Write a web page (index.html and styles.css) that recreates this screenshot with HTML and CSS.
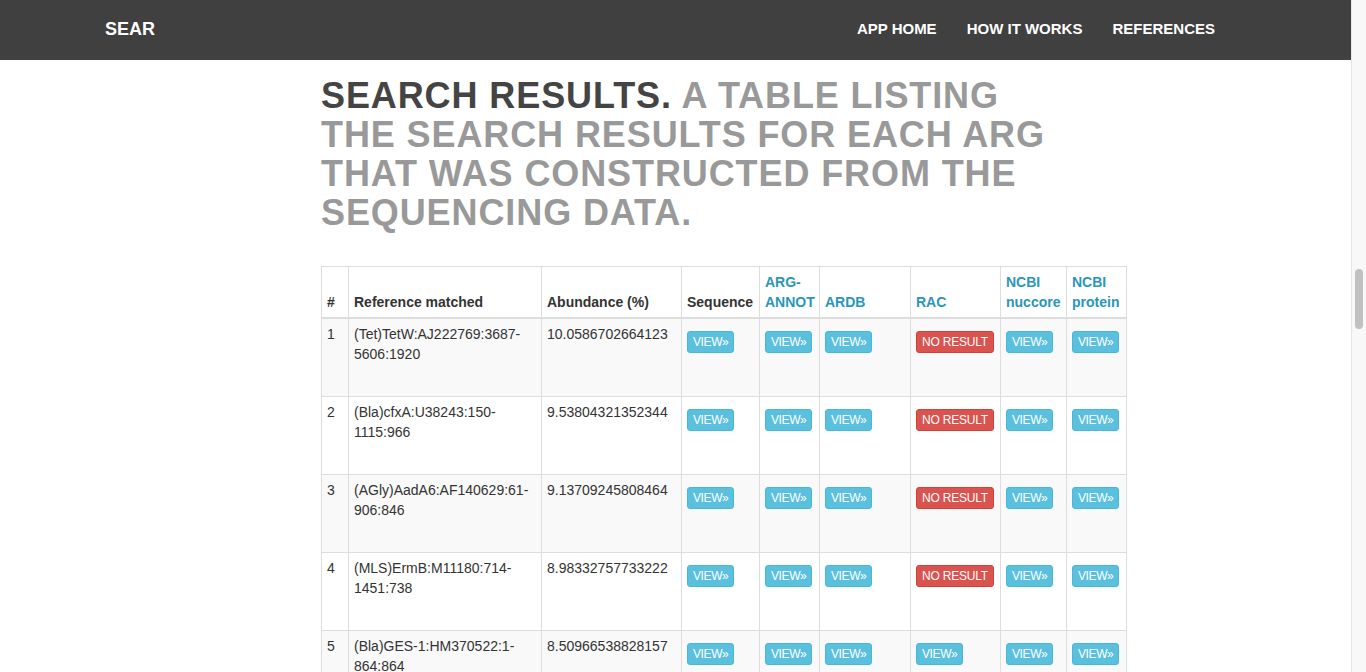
FILE: index.html
```html
<!DOCTYPE html>
<html>
<head>
<meta charset="utf-8">
<title>SEAR - Search results</title>
<link rel="stylesheet" href="styles.css">
</head>
<body>
<div class="viewport">
  <div class="page">
    <header class="navbar">
      <a class="brand" href="#">SEAR</a>
      <nav class="nav">
        <a href="#">APP HOME</a>
        <a href="#">HOW IT WORKS</a>
        <a href="#">REFERENCES</a>
      </nav>
    </header>
    <main class="content">
      <h1 class="title"><span class="dark">SEARCH RESULTS.</span> A TABLE LISTING THE SEARCH RESULTS FOR EACH ARG THAT WAS CONSTRUCTED FROM THE SEQUENCING DATA.</h1>
      <table class="results">
        <colgroup>
          <col class="c1"><col class="c2"><col class="c3"><col class="c4"><col class="c5"><col class="c6"><col class="c7"><col class="c8"><col class="c9">
        </colgroup>
        <thead>
          <tr>
            <th>#</th>
            <th>Reference matched</th>
            <th>Abundance (%)</th>
            <th>Sequence</th>
            <th class="lnk">ARG-ANNOT</th>
            <th class="lnk">ARDB</th>
            <th class="lnk">RAC</th>
            <th class="lnk">NCBI nuccore</th>
            <th class="lnk">NCBI protein</th>
          </tr>
        </thead>
        <tbody>
          <tr>
            <td>1</td><td>(Tet)TetW:AJ222769:3687-5606:1920</td><td>10.0586702664123</td>
            <td><a class="btn info">VIEW»</a></td><td><a class="btn info">VIEW»</a></td><td><a class="btn info">VIEW»</a></td>
            <td><a class="btn danger">NO RESULT</a></td><td><a class="btn info">VIEW»</a></td><td><a class="btn info">VIEW»</a></td>
          </tr>
          <tr>
            <td>2</td><td>(Bla)cfxA:U38243:150-1115:966</td><td>9.53804321352344</td>
            <td><a class="btn info">VIEW»</a></td><td><a class="btn info">VIEW»</a></td><td><a class="btn info">VIEW»</a></td>
            <td><a class="btn danger">NO RESULT</a></td><td><a class="btn info">VIEW»</a></td><td><a class="btn info">VIEW»</a></td>
          </tr>
          <tr>
            <td>3</td><td>(AGly)AadA6:AF140629:61-906:846</td><td>9.13709245808464</td>
            <td><a class="btn info">VIEW»</a></td><td><a class="btn info">VIEW»</a></td><td><a class="btn info">VIEW»</a></td>
            <td><a class="btn danger">NO RESULT</a></td><td><a class="btn info">VIEW»</a></td><td><a class="btn info">VIEW»</a></td>
          </tr>
          <tr>
            <td>4</td><td>(MLS)ErmB:M11180:714-1451:738</td><td>8.98332757733222</td>
            <td><a class="btn info">VIEW»</a></td><td><a class="btn info">VIEW»</a></td><td><a class="btn info">VIEW»</a></td>
            <td><a class="btn danger">NO RESULT</a></td><td><a class="btn info">VIEW»</a></td><td><a class="btn info">VIEW»</a></td>
          </tr>
          <tr>
            <td>5</td><td>(Bla)GES-1:HM370522:1-864:864</td><td>8.50966538828157</td>
            <td><a class="btn info">VIEW»</a></td><td><a class="btn info">VIEW»</a></td><td><a class="btn info">VIEW»</a></td>
            <td><a class="btn info">VIEW»</a></td><td><a class="btn info">VIEW»</a></td><td><a class="btn info">VIEW»</a></td>
          </tr>
        </tbody>
      </table>
    </main>
  </div>
  <div class="scrollbar"><div class="thumb"></div></div>
</div>
</body>
</html>
```

FILE: styles.css
```css
html, body {
  margin: 0;
  padding: 0;
  height: 100%;
  overflow: hidden;
}
body {
  font-family: "Liberation Sans", Arial, sans-serif;
  font-size: 14px;
  line-height: 20px;
  color: #333;
  background: #fff;
}
.viewport {
  display: flex;
  height: 100%;
}
.page {
  flex: 1;
  min-width: 0;
  overflow: hidden;
}
.scrollbar {
  width: 14px;
  flex: none;
  background: #f8f8f8;
  border-left: 1px solid #e6e6e6;
  box-sizing: content-box;
}
.thumb {
  margin: 269px 0 0 3px;
  width: 8px;
  height: 60px;
  border-radius: 4px;
  background: #c1c1c1;
}
.navbar {
  height: 60px;
  background: #404040;
  display: flex;
  align-items: center;
  padding: 0 136px 0 105px;
}
.brand {
  color: #fff;
  text-decoration: none;
  font-size: 18px;
  font-weight: bold;
  margin-top: -2px;
}
.nav {
  margin-left: auto;
  display: flex;
  gap: 30px;
  margin-top: -2px;
}
.nav a {
  color: #fff;
  text-decoration: none;
  font-size: 15px;
  font-weight: bold;
}
.content {
  padding: 16px 0 0 321px;
}
.title {
  margin: 0;
  width: 728px;
  font-size: 36px;
  line-height: 39px;
  font-weight: bold;
  color: #999;
  letter-spacing: 0.9px;
}
.title .dark {
  color: #444;
}
.results {
  margin-top: 34px;
  border-collapse: collapse;
  table-layout: fixed;
  width: 805px;
  border: 1px solid #ddd;
}
.c1 { width: 27px; }
.c2 { width: 193px; }
.c3 { width: 140px; }
.c4 { width: 78px; }
.c5 { width: 60px; }
.c6 { width: 91px; }
.c7 { width: 90px; }
.c8 { width: 66px; }
.c9 { width: 60px; }
.results th, .results td {
  border: 1px solid #ddd;
  padding: 5px;
  text-align: left;
}
.results th {
  vertical-align: bottom;
  border-bottom: 2px solid #ddd;
  font-weight: bold;
  color: #333;
}
.results th.lnk {
  color: #2a96b9;
}
.results td {
  vertical-align: top;
  height: 67px;
}
.results tbody tr:nth-child(odd) {
  background: #f9f9f9;
}
.btn {
  display: inline-block;
  margin-top: 7px;
  padding: 1px 5px;
  font-size: 12px;
  line-height: 18px;
  border-radius: 3px;
  color: #fff;
  border: 1px solid;
  letter-spacing: -0.4px;
  cursor: pointer;
}
.btn.info {
  background: #5bc0de;
  border-color: #46b8da;
}
.btn.danger {
  background: #d9534f;
  border-color: #d43f3a;
  letter-spacing: -0.2px;
}
```
